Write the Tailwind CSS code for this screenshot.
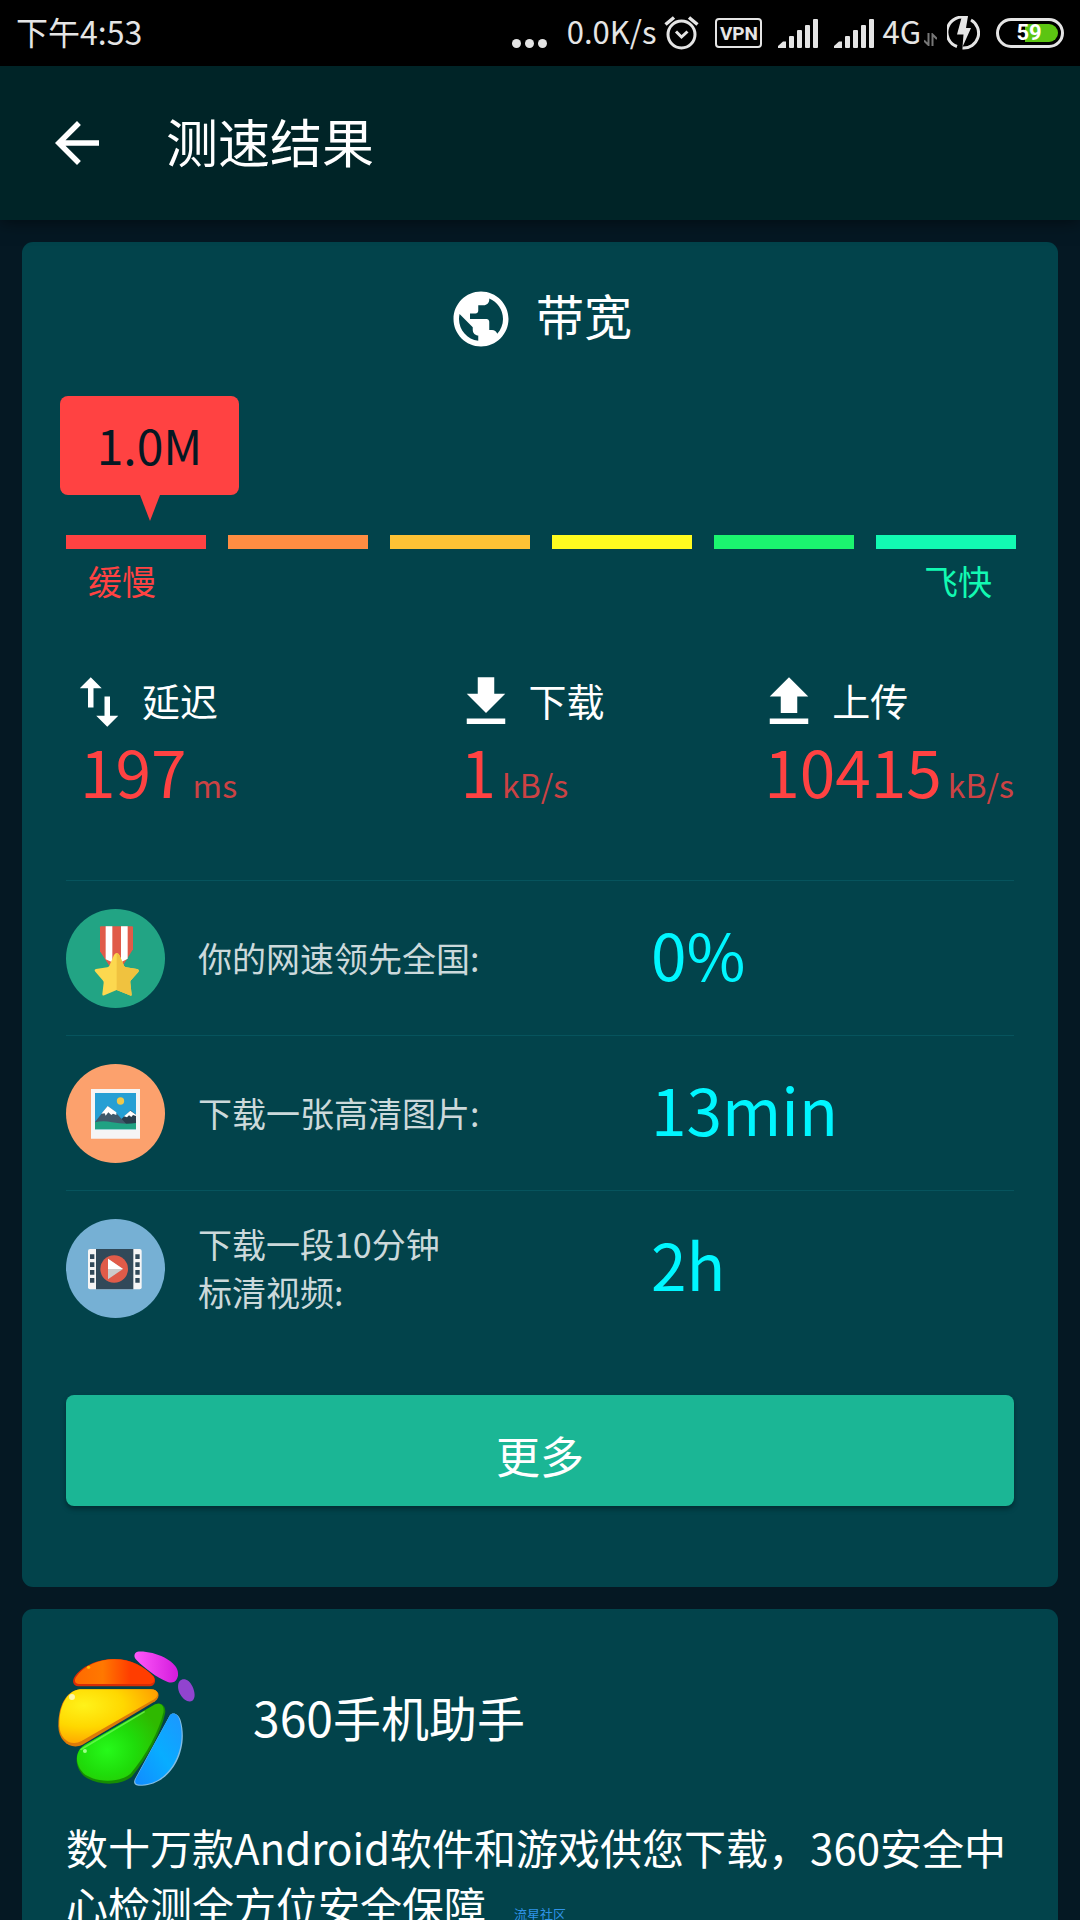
<!DOCTYPE html>
<html lang="zh-CN">
<head>
<meta charset="utf-8">
<meta name="viewport" content="width=device-width, initial-scale=1">
<title>测速结果</title>
<script src="https://cdn.jsdelivr.net/npm/@tailwindcss/browser@4"></script>
</head>
<body class="bg-[#051823] text-white font-['Noto_Sans_CJK_SC',sans-serif]">
<div class="relative flex h-screen flex-col overflow-hidden">

  <!-- Status bar -->
  <div class="flex h-[66px] shrink-0 items-center justify-between bg-black px-4 text-[32px] leading-10 text-[#e5e5e5]">
    <div class="pb-[5px]">下午4:53</div>
    <div class="flex items-center">
      <svg class="mt-5 h-[9px] w-[35px]" viewBox="0 0 35 9" fill="currentColor"><circle cx="4.5" cy="4.5" r="4.5"/><circle cx="17.5" cy="4.5" r="4.5"/><circle cx="30.5" cy="4.5" r="4.5"/></svg>
      <span class="ml-5 pb-[5px] text-[31px]">0.0K/s</span>
      <svg class="ml-2 h-[34px] w-[35px]" viewBox="0 0 35 34" fill="none" stroke="currentColor" stroke-width="3"><circle cx="17.5" cy="18.5" r="13.5"/><path d="M1.500 8.500 10 1.500M33.500 8.500 25 1.500" stroke-width="3.500"/><path d="m12 15.500 5.500 5.500 6-5.500"/></svg>
      <span class="ml-4 flex h-[30px] w-[47px] items-center justify-center rounded border-2 border-current font-['Roboto',sans-serif] text-[19px] font-bold leading-none">VPN</span>
      <svg class="ml-4 h-[29px] w-10" viewBox="0 0 40 29" fill="currentColor"><path d="M0 29v-2l5-4.500h3V29z"/><rect x="11" y="17" width="5" height="12" rx="1"/><rect x="19" y="11" width="5" height="18" rx="1"/><rect x="27" y="6" width="5" height="23" rx="1"/><rect x="35" width="5" height="29" rx="1"/></svg>
      <svg class="ml-4 h-[29px] w-10" viewBox="0 0 40 29" fill="currentColor"><path d="M0 29v-2l5-4.500h3V29z"/><rect x="11" y="17" width="5" height="12" rx="1"/><rect x="19" y="11" width="5" height="18" rx="1"/><rect x="27" y="6" width="5" height="23" rx="1"/><rect x="35" width="5" height="29" rx="1"/></svg>
      <span class="ml-2 pb-[5px] text-[31px]">4G</span>
      <svg class="ml-[3px] mt-3 h-[13px] w-[13px]" viewBox="0 0 13 13" fill="none" stroke="#777" stroke-width="2"><path d="M4.500 0v12L0 7.500M8.500 13V1.500L13 6"/></svg>
      <svg class="ml-[10px] h-[34px] w-[33px]" viewBox="0 0 33 34" fill="none" stroke="currentColor" stroke-width="3"><path d="M20 2A15 15 0 0 0 10 30.500M24 4A15 15 0 0 1 15.500 32"/><path d="M15 0h6l-2 12h5L15.500 31l1-12.500H10z" fill="currentColor" stroke="none"/></svg>
      <div class="relative ml-4 flex h-[30px] w-[68px] items-center justify-center">
        <svg class="absolute inset-0 h-full w-full" viewBox="0 0 68 30"><rect x="1.500" y="1.500" width="65" height="27" rx="13.500" fill="none" stroke="#e5e5e5" stroke-width="3"/><path d="M29 6h24a9 9 0 0 1 0 18H29z" fill="#5cc512"/></svg>
        <span class="relative pr-0.5 font-['Roboto',sans-serif] text-[22px] font-bold leading-none text-white">59</span>
      </div>
    </div>
  </div>

  <!-- App bar -->
  <header class="relative z-10 flex h-[154px] shrink-0 items-center bg-[#002427] pl-11 shadow-[0_2px_16px_rgba(0,0,0,0.5)]">
    <button type="button" aria-label="返回"><svg class="h-[66px] w-[66px]" viewBox="0 0 24 24" fill="currentColor"><path d="M20 11H7.830l5.590-5.590L12 4l-8 8 8 8 1.410-1.410L7.830 13H20z"/></svg></button>
    <h1 class="ml-14 pb-1 text-[52px] leading-[64px]">测速结果</h1>
  </header>

  <main class="flex min-h-0 flex-1 flex-col gap-[22px] overflow-hidden px-[22px] pt-[22px]">
    <section class="shrink-0 rounded-[11px] bg-[#02434b] px-11 pt-11 pb-[81px]">
      <div class="flex items-center justify-center gap-[22px]">
        <svg class="h-[66px] w-[66px]" viewBox="0 0 24 24" fill="currentColor"><path d="M12 2C6.480 2 2 6.480 2 12s4.480 10 10 10 10-4.480 10-10S17.520 2 12 2zm-1 17.930c-3.950-.49-7-3.850-7-7.930 0-.62.080-1.210.210-1.790L9 15v1c0 1.100.9 2 2 2v1.930zm6.900-2.540c-.26-.81-1-1.390-1.900-1.390h-1v-3c0-.55-.45-1-1-1H8v-2h2c.55 0 1-.45 1-1V7h2c1.100 0 2-.9 2-2v-.41c2.930 1.190 5 4.060 5 7.410 0 2.080-.8 3.970-2.100 5.390z"/></svg>
        <h2 class="pb-[10px] text-[48px] leading-[56px]">带宽</h2>
      </div>

      <!-- Speed scale -->
      <div class="-ml-[6px] mt-11 flex w-[179px] flex-col items-center">
        <div class="flex h-[99px] w-full items-center justify-center rounded-lg bg-[#ff4242] pb-1 text-[48px] leading-[60px] text-[#051823]">1.0M</div>
        <svg class="h-[26px] w-5" viewBox="0 0 20 26" fill="#ff4242"><path d="M0 0h20L10 26z"/></svg>
      </div>
      <div class="-mr-0.5 mt-[14px] grid h-[14px] grid-cols-6 gap-[22px]">
        <div class="bg-[#ff4242]"></div>
        <div class="bg-[#ff8d42]"></div>
        <div class="bg-[#fdc235]"></div>
        <div class="bg-[#fffc1f]"></div>
        <div class="bg-[#1bf56f]"></div>
        <div class="bg-[#12fab2]"></div>
      </div>
      <div class="mt-2 flex justify-between px-[22px] text-[34px] leading-[48px]">
        <span class="text-[#ff4242]">缓慢</span>
        <span class="text-[#12fab2]">飞快</span>
      </div>

      <!-- Measurements -->
      <div class="mt-16 grid grid-cols-[387fr_304fr_257fr]">
        <div>
          <div class="flex items-center gap-[10px] text-[38px] leading-[48px]"><svg class="h-[66px] w-[66px]" viewBox="0 0 24 24" fill="currentColor"><path d="M16 17.010V10h-2v7.010h-3L15 21l4-3.990h-3zM9 3L5 6.990h3V14h2V6.990h3L9 3z"/></svg><h3 class="pb-1">延迟</h3></div>
          <div class="flex items-baseline gap-[6px] pl-[14px] text-[64px] leading-[70px] text-[#ff4242]">197<span class="text-[32px] leading-8 text-[#cc4244]">ms</span></div>
        </div>
        <div>
          <div class="flex items-center gap-[10px] text-[38px] leading-[48px]"><svg class="h-[66px] w-[66px]" viewBox="0 0 24 24" fill="currentColor"><path d="M19 9h-4V3H9v6H5l7 7 7-7zM5 18v2h14v-2H5z"/></svg><h3 class="pb-1">下载</h3></div>
          <div class="flex items-baseline gap-[6px] pl-2 text-[64px] leading-[70px] text-[#ff4242]">1<span class="text-[32px] leading-8 text-[#cc4244]">kB/s</span></div>
        </div>
        <div>
          <div class="flex items-center gap-[10px] text-[38px] leading-[48px]"><svg class="h-[66px] w-[66px]" viewBox="0 0 24 24" fill="currentColor"><path d="M9 16h6v-6h4l-7-7-7 7h4zm-4 2h14v2H5z"/></svg><h3 class="pb-1">上传</h3></div>
          <div class="flex items-baseline gap-[6px] pl-2 text-[64px] leading-[70px] text-[#ff4242]">10415<span class="text-[32px] leading-8 text-[#cc4244]">kB/s</span></div>
        </div>
      </div>

      <!-- Comparison rows -->
      <ul class="mt-[75px]">
        <li class="flex h-[155px] items-center border-t border-[#06545d]">
          <svg class="h-[99px] w-[99px] shrink-0" viewBox="0 0 297 297"><circle cx="148.500" cy="148.500" r="148.500" fill="#22a484"/><path d="M102 55q0-3 3-3h93q3 0 3 3v66l-30 48h-42l-27-42z" fill="#e05b49"/><path d="M119 52h20v108l-20-9zM165 52h20v97l-20 11z" fill="#fff"/><path d="m144 138q8-12 16 0l14 32q2 4 6 5l33 5q8 2 4 9l-22 25q-3 3-2 7l4 36q0 5-6 2l-39-16-37 16q-7 2-6-4l4-34q0-4-3-7l-22-26q-5-6 2-8l34-5q4-1 6-5z" fill="#fcd84f"/><path d="M152 132q5 0 8 6l14 32q2 4 6 5l33 5q8 2 4 9l-22 25q-3 3-2 7l4 36q0 5-6 2l-39-16z" fill="#f0c23f"/></svg>
          <p class="ml-[33px] w-[453px] text-[34px] leading-[48px] text-[#ccd9db]">你的网速领先全国:</p>
          <p class="pb-[10px] text-[64px] leading-[80px] text-[#00f6ff]">0%</p>
        </li>
        <li class="flex h-[155px] items-center border-t border-[#06545d]">
          <svg class="h-[99px] w-[99px] shrink-0" viewBox="0 0 297 297"><circle cx="148.500" cy="148.500" r="148.500" fill="#fca16d"/><path d="M75 75h147v149H75z" fill="#f5f5f5"/><path d="M87 87h123v109H87z" fill="#269fd4"/><circle cx="163.500" cy="111" r="11" fill="#efc84a"/><path d="m150 181 44-42 16 13v28z" fill="#293d4c"/><path d="m174 157 19-17 17 12v4l-9-3-5 6-7-5-6 6z" fill="#fff"/><path d="m87 174 38-48 20 15 38 41H87z" fill="#40596b"/><path d="m106 149 19-23 26 19v8l-10-4-5 4-9-8-8 10-3-7z" fill="#fff"/><path d="M87 175q26-7 51 0 40 7 72 2v19H87z" fill="#20a283"/></svg>
          <p class="ml-[33px] w-[453px] text-[34px] leading-[48px] text-[#ccd9db]">下载一张高清图片:</p>
          <p class="pb-[10px] text-[64px] leading-[80px] text-[#00f6ff]">13min</p>
        </li>
        <li class="flex h-[155px] items-center border-t border-[#06545d]">
          <svg class="h-[99px] w-[99px] shrink-0" viewBox="0 0 297 297"><circle cx="148.500" cy="148.500" r="148.500" fill="#76b0d4"/><rect x="66" y="90" width="161" height="121" rx="6" fill="#f5f5f5"/><path d="M90 90h112v121H90z" fill="#314959"/><path d="M72 106h13v14H72zM72 130h13v14H72zM72 153h13v14H72zM72 177h13v14H72zM208 106h13v14h-13zM208 130h13v14h-13zM208 153h13v14h-13zM208 177h13v14h-13z" fill="#314959"/><circle cx="144.500" cy="150" r="41.500" fill="#e05b49"/><path d="M126 119v62l45-31z" fill="#ccc"/><path d="M126 119v31h45z" fill="#fff"/></svg>
          <p class="ml-[33px] w-[453px] text-[34px] leading-[48px] text-[#ccd9db]">下载一段10分钟<br>标清视频:</p>
          <p class="pb-[10px] text-[64px] leading-[80px] text-[#00f6ff]">2h</p>
        </li>
      </ul>

      <button type="button" class="mt-[50px] flex h-[111px] w-full items-center justify-center rounded-lg bg-[#1bb695] pt-2 text-[44px] leading-[56px] shadow-[0_3px_5px_rgba(0,0,0,0.35)]">更多</button>
    </section>

    <section class="shrink-0 rounded-t-[11px] bg-[#02434b] px-11 pt-10 pb-11">
      <div class="flex items-center gap-14">
        <svg class="-ml-[10px] h-[139px] w-[141px] shrink-0" viewBox="78 56 424 416">
          <defs>
            <linearGradient id="red" x1="0" x2="1"><stop stop-color="#ff6a00"/><stop offset=".35" stop-color="#ff7800"/><stop offset=".7" stop-color="#ff3d00"/></linearGradient>
            <radialGradient id="yellow" cx=".25" cy=".3" r=".8"><stop stop-color="#fff21a"/><stop offset=".5" stop-color="#ffd800"/><stop offset="1" stop-color="#ff9c00"/></radialGradient>
            <radialGradient id="green" cx=".35" cy=".6" r=".65"><stop stop-color="#26fa1a"/><stop offset=".5" stop-color="#1fdc0a"/><stop offset="1" stop-color="#2fb900"/></radialGradient>
            <linearGradient id="blue" x1="1" x2="0" y2="1"><stop stop-color="#1d96ff"/><stop offset=".5" stop-color="#08adff"/><stop offset="1" stop-color="#128bff"/></linearGradient>
            <linearGradient id="pink"><stop stop-color="#ff59fa"/><stop offset="1" stop-color="#d31bdc"/></linearGradient>
          </defs>
          <path d="M145 167c-16 0-19-16-12-27 21-35 75-56 122-55 48 0 91 23 117 53 8 11 4 29-12 29z" fill="#d92c06"/>
          <path d="M147 160c-12 0-15-10-9-20 22-34 71-55 117-54 47 0 89 22 116 52 6 9 2 22-10 22z" fill="url(#red)"/>
          <path d="M150 176h213c25 0 31 23 13 36L158 343c-36 17-72-11-73-55-1-60 22-107 65-112z" fill="#dc7b08"/>
          <path d="M150 176h213c23 0 28 19 10 30L155 332c-32 17-66-5-67-48-1-57 22-103 62-108z" fill="url(#yellow)"/>
          <path d="m165 343 210-121c19-9 35 5 31 27-12 55-51 131-101 191-36 27-96 25-133 4-34-20-48-75-7-101z" fill="#168d03"/>
          <path d="m165 343 210-121c17-8 29 3 26 23-12 54-52 130-99 185-33 27-92 27-129 7-34-19-47-69-8-94z" fill="url(#green)"/>
          <path d="M420 255c10-12 27-4 33 15 26 90-30 193-116 196-24 2-29-8-20-23z" fill="#83bde2"/>
          <path d="M420 255c10-12 25-4 30 15 24 88-31 190-113 193-20 1-25-6-18-20z" fill="url(#blue)"/>
          <path d="M323 63c51-3 112 25 121 58 5 22-8 41-30 33-35-14-69-41-94-66-10-10-7-22 3-25z" fill="url(#pink)"/>
          <path d="M450 151c12-11 29-3 38 16 8 17 10 34 1 43-12 8-28-2-37-18-9-15-9-33-2-41z" fill="#9144cf"/>
          <path d="m153 357 190-113" stroke="#7dff62" stroke-width="5" stroke-linecap="round" opacity=".65"/>
          <circle cx="126" cy="199" r="9" fill="#fffbd0" opacity=".8"/><circle cx="176" cy="110" r="5" fill="#ffb800"/><circle cx="165" cy="362" r="6" fill="#9dff88"/>
        </svg>
        <h2 class="pb-[5px] text-[48px] leading-[60px]">360手机助手</h2>
      </div>
      <p class="mt-[30px] text-[42px] leading-[58px]">数十万款Android软件和游戏供您下载，360安全中心检测全方位安全保障</p>
    </section>
  </main>

  <!-- Watermark -->
  <div class="absolute bottom-0 left-1/2 -translate-x-1/2 text-[13px] leading-[13px] text-[#2f93e6]">流星社区</div>
</div>
</body>
</html>
